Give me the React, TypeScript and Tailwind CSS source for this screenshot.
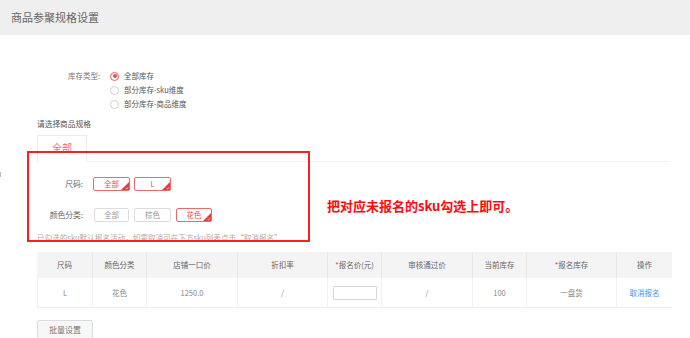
import React from "react";

function Radio({ checked, label }: { checked?: boolean; label: string }) {
  return (
    <div className="flex h-[14px] items-center">
      <span
        className={
          "flex h-[9px] w-[9px] items-center justify-center rounded-full border bg-white " +
          (checked ? "border-[#ec5a5a]" : "border-[#cfcfcf]")
        }
      >
        {checked && <span className="h-[4px] w-[4px] rounded-full bg-[#ec4a4a]" />}
      </span>
      <span className="ml-[5px] text-[7.5px] text-[#555]">{label}</span>
    </div>
  );
}

function SkuBtn({ label, selected, w = 36 }: { label: string; selected?: boolean; w?: number }) {
  return (
    <div
      className={
        "relative flex h-[14px] items-center justify-center rounded-[2px] border text-[7.5px] " +
        (selected ? "border-[#ec6a6a] text-[#e85050]" : "border-[#dddddd] text-[#999]")
      }
      style={{ width: w }}
    >
      {label}
      {selected && (
        <svg className="absolute bottom-0 right-0" width="8" height="8" viewBox="0 0 8 8">
          <polygon points="8,0 8,8 0,8" fill="#e83a3a" />
          <path d="M4.6 6.2 L5.6 7 L7.2 5.2" stroke="#fff" strokeWidth="0.7" fill="none" />
        </svg>
      )}
    </div>
  );
}

const cols = [
  { w: 56, h: "尺码", v: "L" },
  { w: 54, h: "颜色分类", v: "花色" },
  { w: 91, h: "店铺一口价", v: "1250.0" },
  { w: 90, h: "折扣率", v: "/" },
  { w: 54, h: "报名价(元)", v: "", req: true, input: true },
  { w: 91, h: "审核通过价", v: "/" },
  { w: 54, h: "当前库存", v: "100" },
  { w: 90, h: "报名库存", v: "一盘货", req: true },
  { w: 55, h: "操作", v: "取消报名", link: true },
];

export default function App() {
  return (
    <div className="relative h-[338px] w-[690px] overflow-hidden bg-white font-['Noto_Sans_CJK_SC','Noto_Sans',sans-serif] text-[#666]">
      <div className="flex h-[35px] items-center bg-[#efefef] pl-[11px] text-[11px] text-[#666]">
        商品参聚规格设置
      </div>

      <div className="pl-[37px]">
        <div className="mt-[34px] flex">
          <div className="w-[63px] text-right text-[7.5px] leading-[14px] text-[#777]">库存类型:</div>
          <div className="ml-[10px] flex flex-col">
            <Radio checked label="全部库存" />
            <Radio label="部分库存-sku维度" />
            <Radio label="部分库存-商品维度" />
          </div>
        </div>

        <div className="mt-[6px] text-[7.7px] leading-[14px] text-[#555]">请选择商品规格</div>

        <div className="mt-[4px] flex w-[633px]">
          <div className="flex h-[27px] w-[50px] justify-center border border-b-0 border-[#ececec] pt-[4px] text-[10px] leading-[16px] text-[#ee6b6b]">
            全部
          </div>
          <div className="flex-1 border-b border-[#f0f0f0]" />
        </div>

        <div className="mt-[15px] flex items-center">
          <div className="w-[46px] text-right text-[7.8px] text-[#666]">尺码:</div>
          <div className="ml-[10px] flex gap-[4px]">
            <SkuBtn label="全部" selected w={37} />
            <SkuBtn label="L" selected w={37} />
          </div>
        </div>

        <div className="mt-[17px] flex items-center">
          <div className="w-[46px] text-right text-[7.8px] text-[#666]">颜色分类:</div>
          <div className="ml-[11px] flex gap-[5px]">
            <SkuBtn label="全部" w={35} />
            <SkuBtn label="棕色" w={37} />
            <SkuBtn label="花色" selected w={36} />
          </div>
        </div>

        <div className="mt-[10px] text-[7.6px] leading-[12px] text-[#aaa]">
          已勾选的sku默认报名活动，如需取消可在下方sku列表点击“取消报名”
        </div>

        <div className="mt-[8px] w-[635px] border-b border-[#eeeeee]">
          <div className="flex h-[26px] bg-[#f4f4f4]">
            {cols.map((c, i) => (
              <div
                key={i}
                className={
                  "flex items-center justify-center text-[7.5px] text-[#666] " +
                  (i < cols.length - 1 ? "border-r border-[#e8e8e8]" : "")
                }
                style={{ width: c.w }}
              >
                {c.req && <span className="text-[#e83030]">*</span>}
                {c.h}
              </div>
            ))}
          </div>
          <div className="flex h-[29px] bg-white">
            {cols.map((c, i) => (
              <div
                key={i}
                className={
                  "flex items-center justify-center text-[7.5px] " +
                  (c.link ? "text-[#4a90e2] " : "text-[#888] ") +
                  (i < cols.length - 1 ? "border-r border-[#f0f0f0]" : "") +
                  (i === 0 ? " border-l border-[#f0f0f0]" : "")
                }
                style={{ width: c.w }}
              >
                {c.input ? (
                  <div className="h-[14px] w-[44px] rounded-[1px] border border-[#d6d6d6] bg-white" />
                ) : (
                  c.v
                )}
              </div>
            ))}
          </div>
        </div>

        <div className="mt-[12px] flex h-[20px] w-[56px] items-center justify-center rounded-[2px] border border-[#dcdcdc] bg-[#f7f7f7] text-[8px] text-[#777]">
          批量设置
        </div>
      </div>

      <div className="absolute left-[27px] top-[151px] h-[91px] w-[283px] border-2 border-[#ff1e1e]" />
      <div className="absolute left-[327px] top-[198px] text-[13px] font-bold leading-[16px] text-[#ff0a0a]">
        把对应未报名的sku勾选上即可。
      </div>
      <div className="absolute left-0 top-[172px] h-[5px] w-[1px] bg-[#bbb]" />
    </div>
  );
}
